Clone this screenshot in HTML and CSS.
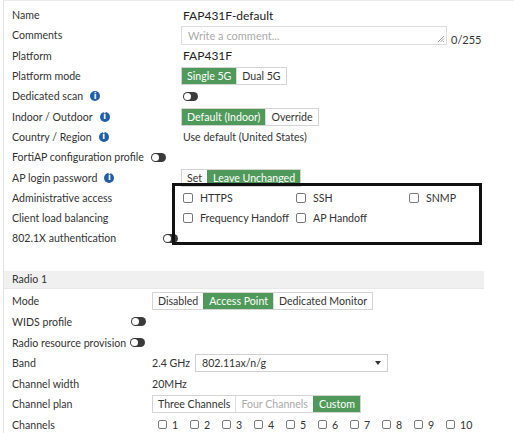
FILE: index.html
```html
<!DOCTYPE html>
<html>
<head>
<meta charset="utf-8">
<link rel="stylesheet" href="styles.css">
</head>
<body>
<div class="panel">
  <div class="sec1">
    <div class="row"><div class="label">Name</div><div class="value big">FAP431F-default</div></div>
    <div class="row"><div class="label">Comments</div>
      <div class="comment"><span class="ph">Write a comment...</span>
        <svg class="grip" width="8" height="8" viewBox="0 0 8 8"><path d="M7 1L1 7M7 3.5L3.5 7M7 6L6 7" stroke="#999" stroke-width="1"/></svg>
      </div><span class="count">0/255</span></div>
    <div class="row"><div class="label">Platform</div><div class="value big">FAP431F</div></div>
    <div class="row"><div class="label">Platform mode</div>
      <div class="btns"><span class="btn on">Single 5G</span><span class="btn">Dual 5G</span></div></div>
    <div class="row"><div class="label">Dedicated scan <span class="info">i</span></div><div class="value"><span class="toggle"><span class="knob"></span></span></div></div>
    <div class="row"><div class="label">Indoor / Outdoor <span class="info">i</span></div>
      <div class="btns"><span class="btn on">Default (Indoor)</span><span class="btn">Override</span></div></div>
    <div class="row"><div class="label">Country / Region <span class="info">i</span></div><div class="value">Use default (United States)</div></div>
    <div class="row"><div class="label w139">FortiAP configuration profile</div><span class="toggle"><span class="knob"></span></span></div>
    <div class="row"><div class="label">AP login password <span class="info">i</span></div>
      <div class="btns"><span class="btn">Set</span><span class="btn on">Leave Unchanged</span></div></div>
    <div class="row"><div class="label">Administrative access</div>
      <div class="checks">
        <span class="chk"><span class="box"></span>HTTPS</span>
        <span class="chk"><span class="box"></span>SSH</span>
        <span class="chk"><span class="box"></span>SNMP</span>
      </div></div>
    <div class="row"><div class="label">Client load balancing</div>
      <div class="checks">
        <span class="chk"><span class="box"></span>Frequency Handoff</span>
        <span class="chk"><span class="box"></span>AP Handoff</span>
      </div></div>
    <div class="row"><div class="label w151">802.1X authentication</div><span class="toggle"><span class="knob"></span></span></div>
  </div>
  <div class="highlight"></div>
  <div class="radio-head">Radio 1</div>
  <div class="sec2">
    <div class="row"><div class="label">Mode</div>
      <div class="btns"><span class="btn">Disabled</span><span class="btn on">Access Point</span><span class="btn">Dedicated Monitor</span></div></div>
    <div class="row"><div class="label w119">WIDS profile</div><span class="toggle"><span class="knob"></span></span></div>
    <div class="row"><div class="label w115">Radio resource provision</div><span class="toggle"><span class="knob"></span></span></div>
    <div class="row"><div class="label">Band</div><span class="band">2.4 GHz</span>
      <div class="select"><span>802.11ax/n/g</span><span class="arrow"></span></div></div>
    <div class="row"><div class="label">Channel width</div><span>20MHz</span></div>
    <div class="row"><div class="label">Channel plan</div>
      <div class="btns"><span class="btn">Three Channels</span><span class="btn dis">Four Channels</span><span class="btn on">Custom</span></div></div>
    <div class="row"><div class="label">Channels</div>
      <div class="chans">
        <span class="ch"><span class="box"></span>1</span>
        <span class="ch"><span class="box"></span>2</span>
        <span class="ch"><span class="box"></span>3</span>
        <span class="ch"><span class="box"></span>4</span>
        <span class="ch"><span class="box"></span>5</span>
        <span class="ch"><span class="box"></span>6</span>
        <span class="ch"><span class="box"></span>7</span>
        <span class="ch"><span class="box"></span>8</span>
        <span class="ch"><span class="box"></span>9</span>
        <span class="ch"><span class="box"></span>10</span>
      </div></div>
  </div>
</div>
</body>
</html>
```
FILE: styles.css
```css
* { box-sizing: border-box; }
body {
  margin: 0;
  font-family: Lato, "Open Sans", sans-serif;
  font-size: 10.6px;
  color: #333;
  background: #fff;
}
.panel {
  margin-left: 3px;
  border-left: 1px solid #e2e2e2;
  border-top: 1px solid #ececec;
  position: relative;
  height: 433px;
}
.sec1 { padding-top: 4px; }
.sec2 { padding-top: 2px; }
.row {
  display: flex;
  align-items: center;
  height: 20.3px;
  white-space: nowrap;
}
.sec2 .row { height: 20.6px; }
.label {
  width: 177px;
  flex: none;
  padding-left: 8px;
  display: flex;
  align-items: center;
}
.sec2 .label { width: 148px; }
.sec1 .label.w139 { width: 147px; }
.sec1 .label.w151 { width: 159px; }
.sec2 .label.w119 { width: 127px; }
.sec2 .label.w115 { width: 126px; }
.value { padding-left: 2px; display: flex; align-items: center; }
.big { font-size: 12px; color: #222; }
.info {
  display: inline-flex;
  align-items: center;
  justify-content: center;
  width: 10px;
  height: 10px;
  border-radius: 50%;
  background: #1f5ea8;
  color: #fff;
  font-size: 8px;
  font-weight: bold;
  margin-left: 7px;
  font-family: "DejaVu Sans", sans-serif;
}
.comment {
  width: 266px;
  height: 19px;
  border: 1px solid #ddd;
  display: flex;
  align-items: center;
  justify-content: space-between;
  padding: 0 1px 0 6px;
  color: #aaa;
  font-size: 11px;
}
.grip { align-self: flex-end; margin-bottom: 1px; }
.count { margin-left: 4px; align-self: flex-end; font-size: 11px; }
.btns { display: flex; border: 1px solid #d4d4d4; height: 18px; }
.btn {
  display: flex;
  align-items: center;
  padding: 0 5px;
  color: #333;
}
.btn + .btn { border-left: 1px solid #ddd; }
.btn.on { background: #4f9a5a; color: #fff; border-color: #4f9a5a; }
.btn.dis { color: #aaa; }
.toggle {
  display: flex;
  align-items: center;
  width: 15px;
  height: 9px;
  border-radius: 5px;
  background: #3b3b3b;
  padding: 1px;
  flex: none;
}
.knob {
  width: 7px;
  height: 7px;
  border-radius: 50%;
  background: #fff;
}
.checks { display: flex; padding-left: 2px; }
.chk { display: flex; align-items: center; width: 113px; }
.box {
  width: 10px;
  height: 10px;
  border: 1px solid #7a7a7a;
  border-radius: 2px;
  background: #fff;
  margin-right: 7px;
  flex: none;
}
.highlight {
  position: absolute;
  left: 168px;
  top: 182px;
  width: 310px;
  height: 62px;
  border: 3px solid #111;
}
.radio-head {
  margin-top: 22px;
  height: 18.5px;
  width: 480px;
  background: #f0f0f0;
  border-bottom: 1px solid #e8e8e8;
  padding-left: 8px;
  display: flex;
  align-items: center;
}
.band { margin-right: 5px; }
.select {
  width: 193px;
  height: 18px;
  border: 1px solid #d0d0d0;
  display: flex;
  align-items: center;
  justify-content: space-between;
  padding: 0 6px 0 6px;
}
.arrow {
  width: 0;
  height: 0;
  border-left: 3px solid transparent;
  border-right: 3px solid transparent;
  border-top: 4px solid #333;
}
.chans { display: flex; padding-left: 6px; }
.ch { display: flex; align-items: center; width: 32px; }
.ch .box { width: 9px; height: 9px; margin-right: 5px; }
```
